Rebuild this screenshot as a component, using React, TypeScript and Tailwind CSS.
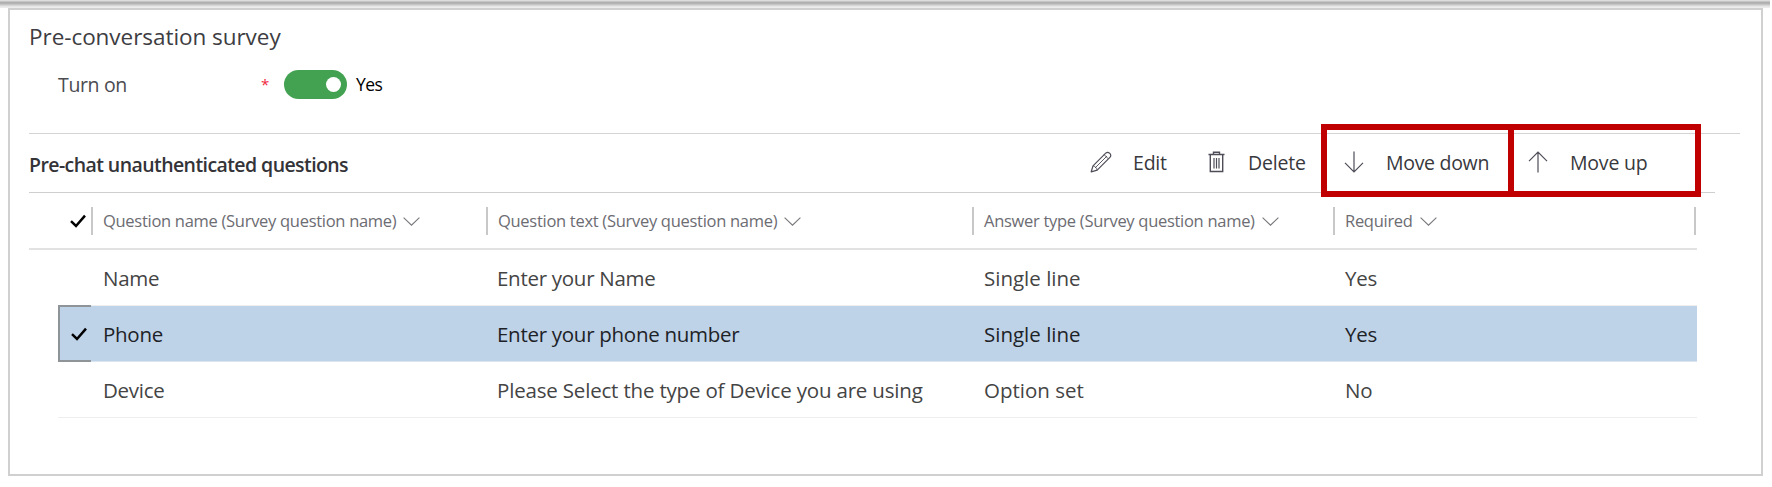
type Row = { name: string; text: string; type: string; required: string; selected?: boolean };

const rows: Row[] = [
  { name: 'Name', text: 'Enter your Name', type: 'Single line', required: 'Yes' },
  { name: 'Phone', text: 'Enter your phone number', type: 'Single line', required: 'Yes', selected: true },
  { name: 'Device', text: 'Please Select the type of Device you are using', type: 'Option set', required: 'No' },
];

const columns = [
  'Question name (Survey question name)',
  'Question text (Survey question name)',
  'Answer type (Survey question name)',
  'Required',
];

function Check() {
  return (
    <svg width="16" height="14" viewBox="0 0 16 14" fill="none" stroke="currentColor" strokeWidth="2.5">
      <path d="M1 7.2 6 12 15 1.6" />
    </svg>
  );
}

function Chevron() {
  return (
    <svg width="17" height="9" viewBox="0 0 17 9" fill="none" stroke="#77777c" strokeWidth="1.1">
      <path d="M.6.6 8.5 8.2 16.4.6" />
    </svg>
  );
}

function Pencil() {
  return (
    <svg width="22" height="22" viewBox="0 0 22 22" fill="none" stroke="#4d4d58" strokeWidth="1.2" strokeLinejoin="round">
      <path d="M1.2 20.8 3 14.9 15.7 2.2C18.3-.3 22.6 3.7 19.9 6.4L7.2 19.1Z" />
      <path d="M3 14.9C5 15.2 6.8 17 7.2 19.1M14.2 3.7l4.2 4.2M5 17 17 5" strokeWidth="0.9" />
    </svg>
  );
}

function Trash() {
  return (
    <svg width="17" height="22" viewBox="0 0 17 22" fill="none" stroke="#4d4d58" strokeWidth="1.4">
      <path d="M.5 3.5h16M5.5 3V1.2h6V3M2.3 3.5V20.5h12.4V3.5" />
      <path d="M6 7v10.5M8.5 7v10.5M11 7v10.5" strokeWidth="1.2" />
    </svg>
  );
}

function Arrow({ up }: { up?: boolean }) {
  return (
    <svg className={up ? 'rotate-180' : ''} width="20" height="22" viewBox="0 0 20 22" fill="none" stroke="#4d4d58" strokeWidth="1.2">
      <path d="M10 .5v20M1 11.8l9 9 9-9" />
    </svg>
  );
}

const grid = 'grid grid-cols-[33px_395px_486px_361px_363px]';

export default function App() {
  return (
    <div className="h-[487px] w-[1772px] overflow-hidden bg-white font-['Open_Sans',sans-serif] text-[#444]">
      <div className="h-2 w-[1770px] bg-linear-to-b from-[#e8e8e8] via-[#a8a8a8] via-35% to-[#ececec] to-85%" />
      <section className="ml-2 h-[468px] w-[1755px] border-2 border-[#d0d0d0] pl-5">
        <div className="-ml-px flex h-[54px] items-center text-[22.5px] tracking-[-0.05px] text-[#3d3d42]">Pre-conversation survey</div>
        <div className="flex h-[41px] items-center pl-[28px]">
          <div className="w-[203px] pt-[21px] pb-[20px] text-[19.5px] leading-none tracking-[-0.35px] text-[#4b4b50]">Turn on</div>
          <div className="flex h-9 w-[23px] items-center text-[15px] text-[#f0263c]">*</div>
          <div className="-mt-[1px] flex h-[29px] w-[63px] items-center justify-end rounded-full bg-[#43a152] pr-[6px]">
            <div className="h-[15px] w-[15px] rounded-full bg-white" />
          </div>
          <div className="-mt-[2px] pl-[9px] text-[17.5px] leading-6 tracking-[-0.6px] text-black">Yes</div>
        </div>
        <div className="-ml-px mt-[28px] h-px w-[1711px] bg-[#d4d4d4]" />
        <div className="relative -ml-px flex h-[59px] w-[1686px] items-center border-b border-[#cfcfcf]">
          <h2 className="w-[1061px] pt-[3px] text-[19.5px] font-semibold tracking-[-0.58px] text-[#333338]">
            Pre-chat unauthenticated questions
          </h2>
          <div className="-mt-[2px] flex items-center text-[19.5px] tracking-[-0.2px] text-[#38383d]">
            <div className="flex w-[118px] items-center gap-[21px]">
              <Pencil />
              <span className="pt-[2px]">Edit</span>
            </div>
            <div className="flex w-[136px] items-center gap-[23px]">
              <Trash />
              <span className="pt-[2px]">Delete</span>
            </div>
            <div className="flex w-[184px] items-center gap-[22px]">
              <Arrow />
              <span className="pt-[2px] tracking-[-0.3px]">Move down</span>
            </div>
            <div className="flex items-center gap-[22px]">
              <Arrow up />
              <span className="pt-[2px]">Move up</span>
            </div>
          </div>
          <div className="absolute top-[-10px] left-[1292px] flex h-[73px] w-[380px] border-6 border-[#c00000]">
            <div className="w-[187px] border-r-6 border-[#c00000]" />
          </div>
        </div>
        <div className="-ml-px h-[57px] w-[1668px] border-b-2 border-[#e2e2e2] pl-[29px]">
          <div className={`${grid} h-14 items-center text-[16.5px] tracking-[-0.29px] text-[#6c6c72]`}>
            <div className="flex h-7 items-center pl-3 text-black">
              <Check />
            </div>
            {columns.map((c, i) => (
              <div
                key={c}
                className={`flex h-7 items-center gap-[7px] border-l-2 border-[#c8c8c8] pl-[10px] ${i === 3 ? 'border-r-2' : ''}`}
              >
                {c}
                <Chevron />
              </div>
            ))}
          </div>
        </div>
        <div className="ml-7 w-[1639px] text-[20.5px] tracking-[-0.28px]">
          {rows.map((r) => (
            <div
              key={r.name}
              className={`${grid} h-14 items-center border-b ${r.selected ? 'border-[#dbe5ef] bg-[#bfd3e8] text-[#1d2227]' : 'border-[#eeeeee] pt-[2px]'}`}
            >
              <div className={`flex items-center pl-[11px] text-black ${r.selected ? 'mt-[-1px] h-[57px] self-start border-y-2 border-l-2 border-[#8f9499]' : ''}`}>
                {r.selected && <Check />}
              </div>
              <div className="pl-3">{r.name}</div>
              <div className={`pl-[11px] ${r.text.length > 30 ? 'tracking-[-0.18px]' : ''}`}>{r.text}</div>
              <div className="pl-3 tracking-[0px]">{r.type}</div>
              <div className="pl-3 tracking-[-0.2px]">{r.required}</div>
            </div>
          ))}
        </div>
      </section>
    </div>
  );
}
